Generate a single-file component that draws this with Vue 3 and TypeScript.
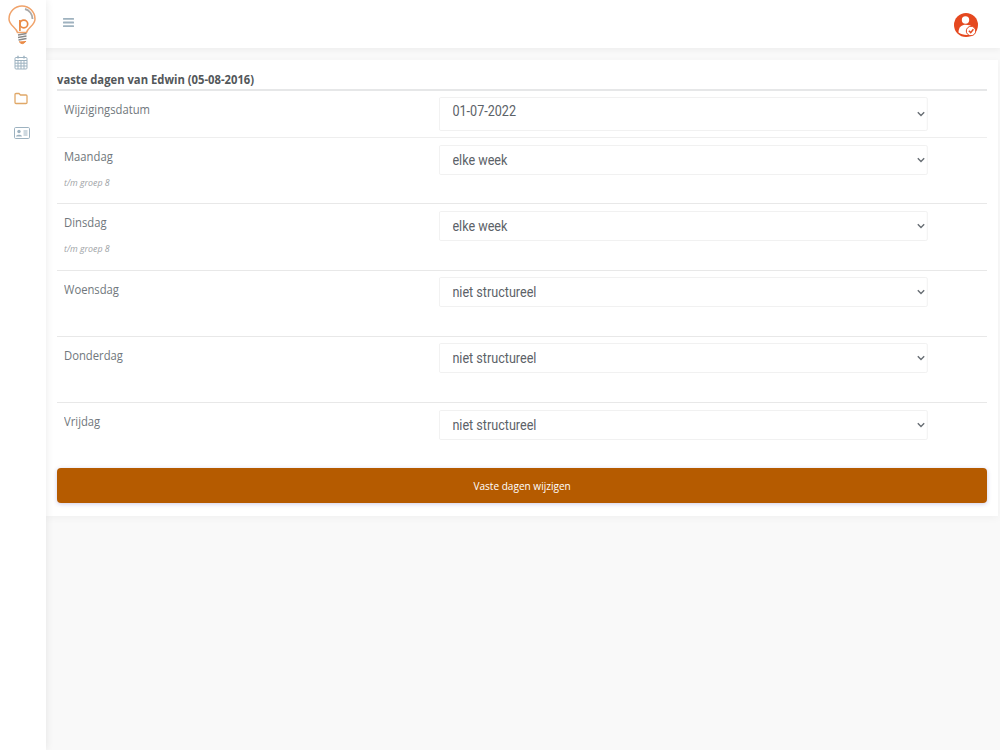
<script setup lang="ts">
interface Row { label: string; note?: string; value: string; options: string[] }
const rows: Row[] = [
  { label: 'Wijzigingsdatum', value: '01-07-2022', options: ['01-07-2022'] },
  { label: 'Maandag', note: 't/m groep 8', value: 'elke week', options: ['elke week', 'niet structureel'] },
  { label: 'Dinsdag', note: 't/m groep 8', value: 'elke week', options: ['elke week', 'niet structureel'] },
  { label: 'Woensdag', value: 'niet structureel', options: ['elke week', 'niet structureel'] },
  { label: 'Donderdag', value: 'niet structureel', options: ['elke week', 'niet structureel'] },
  { label: 'Vrijdag', value: 'niet structureel', options: ['elke week', 'niet structureel'] },
]
</script>

<template>
  <div class="app">
    <aside class="sidebar">
      <div class="logo">
        <svg width="30" height="42" viewBox="0 0 30 42" fill="none">
          <path d="M9.5 27.5 C8.5 22.5 1 20.5 1 14 A13 13 0 0 1 27 14 C27 20.5 19.5 22.5 18.5 27.5 Z" stroke="#f0a36b" stroke-width="1.5" />
          <path d="M17 4 A10.5 10.5 0 0 1 24.5 14" stroke="#a9a9a9" stroke-width="1.9" />
          <circle cx="15.8" cy="19" r="3.9" stroke="#ea8a45" stroke-width="1.7" />
          <path d="M11.9 15 V26" stroke="#ea8a45" stroke-width="1.7" />
          <path d="M10 30 L18.5 28.5 M10 32.5 L18.5 31 M10.5 35 L18.5 33.5" stroke="#8a8a8a" stroke-width="1.3" />
          <path d="M11 36.5 Q14.5 41 18 36" fill="#ea8a45" stroke="#ea8a45" stroke-width="1" />
        </svg>
      </div>
      <nav class="nav">
        <svg width="14" height="15" viewBox="0 0 14 15" fill="none" stroke="#9db2c0" stroke-width="1">
          <rect x="1" y="2.5" width="12" height="11.5" rx="1" />
          <path d="M1 5.5 H13 M1 8.2 H13 M1 11 H13 M4 5.5 V14 M7 5.5 V14 M10 5.5 V14" />
          <path d="M4 .8 V3.5 M10 .8 V3.5" stroke-width="1.4" />
        </svg>
        <svg width="14" height="13" viewBox="0 0 14 13" fill="none" stroke="#e0a868" stroke-width="1.3">
          <path d="M1 2.5 A1 1 0 0 1 2 1.5 H5 L6.5 3 H12 A1 1 0 0 1 13 4 V10.5 A1 1 0 0 1 12 11.5 H2 A1 1 0 0 1 1 10.5 Z" />
        </svg>
        <svg width="16" height="12" viewBox="0 0 16 12" fill="none">
          <rect x=".5" y=".5" width="15" height="11" rx="1.2" stroke="#9db2c0" />
          <circle cx="5" cy="4.5" r="1.7" fill="#9db2c0" />
          <path d="M2 9.5 C2 7 8 7 8 9.5 Z" fill="#9db2c0" />
          <path d="M9.5 4 H13.5 M9.5 6 H13.5 M9.5 8 H13.5" stroke="#9db2c0" />
        </svg>
      </nav>
    </aside>

    <div class="main">
      <header class="topbar">
        <svg class="burger" width="11" height="9" viewBox="0 0 11 9" fill="#9fb2bf">
          <rect y="0" width="11" height="1.8" rx=".5" />
          <rect y="3.6" width="11" height="1.8" rx=".5" />
          <rect y="7.2" width="11" height="1.8" rx=".5" />
        </svg>
        <svg class="avatar" width="24" height="24" viewBox="0 0 24 24">
          <circle cx="12" cy="12" r="12" fill="#e5481f" />
          <circle cx="11.5" cy="7" r="3.7" fill="#fff" />
          <path d="M4.5 19.5 C4.5 14 8 11.8 11.5 11.8 C14.5 11.8 17 12.6 18.5 14 L17 21.5 C12 22.5 7 21.5 4.5 19.5 Z" fill="#fff" />
          <circle cx="17" cy="18" r="4.7" fill="#fff" stroke="#e5481f" stroke-width="1" />
          <path d="M14.9 17.7 L16.7 19.6 L19.4 16.2" fill="none" stroke="#e5481f" stroke-width="1.5" />
        </svg>
      </header>

      <section class="card">
        <h1 class="title">vaste dagen van Edwin (05-08-2016)</h1>
        <form class="form" @submit.prevent>
          <div v-for="(row, i) in rows" :key="row.label" class="row" :class="{ first: i === 0, last: i === rows.length - 1 }">
            <div class="label">
              <div class="name">{{ row.label }}</div>
              <div v-if="row.note" class="note">{{ row.note }}</div>
            </div>
            <div class="field">
              <select class="select" :value="row.value">
                <option v-for="o in row.options" :key="o" :value="o">{{ o }}</option>
              </select>
              <svg class="chevron" width="8" height="6" viewBox="0 0 8 6" fill="none">
                <path d="M.8 1.3 L4 4.5 L7.2 1.3" stroke="#676d73" stroke-width="1.4" />
              </svg>
            </div>
          </div>
          <button class="submit" type="submit"><span class="submit-text">Vaste dagen wijzigen</span></button>
        </form>
      </section>
    </div>
  </div>
</template>

<style scoped>
.app {
  display: flex;
  height: 750px;
  overflow: hidden;
  background: #f9f9f9;
  font-family: "Open Sans", sans-serif;
}
.sidebar {
  width: 46px;
  flex: none;
  background: #fff;
  box-shadow: 0 0 8px rgba(0, 0, 0, 0.09);
  z-index: 2;
}
.logo {
  height: 48px;
  padding: 5px 0 0 8px;
  box-sizing: border-box;
}
.logo svg { display: block; overflow: visible; }
.nav {
  display: flex;
  flex-direction: column;
  align-items: flex-start;
  padding: 7px 0 0 14px;
  gap: 22px;
}
.main {
  flex: 1;
  min-width: 0;
  padding-right: 2px;
}
.topbar {
  height: 48px;
  margin-right: -2px;
  background: #fff;
  display: flex;
  align-items: center;
  justify-content: space-between;
  padding: 0 22px 2px 17px;
  box-shadow: 0 2px 6px rgba(0, 0, 0, 0.05);
  box-sizing: border-box;
  position: relative;
}
.burger { margin-top: -1px; }
.avatar { margin-top: 3px; }
.card {
  margin-top: 12px;
  background: #fff;
  padding: 11px 11px 13px 11px;
  height: 456px;
  box-sizing: border-box;
  box-shadow: 0 2px 8px rgba(0, 0, 0, 0.04);
}
.title {
  margin: 0;
  font-size: 12.5px;
  line-height: 17px;
  font-weight: 700;
  color: #53575a;
  padding-bottom: 1px;
  transform: scaleX(0.9);
  transform-origin: left center;
}
.form {
  border-top: 2px solid #e6e7e8;
}
.row {
  display: flex;
  align-items: flex-start;
  height: 66.25px;
  padding-top: 6.6px;
  box-sizing: border-box;
  border-bottom: 1px solid #e8e8e8;
}
.row.first {
  height: 47px;
  padding-top: 6px;
  border-bottom-color: #eeeeee;
}
.row.last { border-bottom: 0; height: 64px; }
.label {
  width: 382px;
  flex: none;
  padding-left: 7px;
  box-sizing: border-box;
}
.name,
.note {
  transform: scaleX(0.9);
  transform-origin: left center;
}
.name {
  font-size: 12.5px;
  line-height: 17px;
  color: #70777c;
  margin-top: 3.6px;
}
.note {
  font-size: 9.8px;
  line-height: 12px;
  font-style: italic;
  color: #a0a4a7;
  margin-top: 11.4px;
}
.field {
  position: relative;
  width: 489px;
  flex: none;
}
.select {
  display: block;
  width: 543.3px;
  height: 30px;
  padding: 0 0 0 13.9px;
  border: 1px solid #f0f0f0;
  border-radius: 2px;
  background-color: #fff;
  font-family: Roboto, sans-serif;
  font-size: 14px;
  color: #5c6268;
  appearance: none;
  -webkit-appearance: none;
  transform: scaleX(0.9);
  transform-origin: left center;
}
.chevron {
  position: absolute;
  right: 3px;
  top: 50%;
  margin-top: -3px;
}
.row.first .select { height: 34px; padding-bottom: 7px; }
.submit {
  display: block;
  width: 100%;
  height: 35px;
  margin-top: 1px;
  padding: 0;
  border: 0;
  border-radius: 4px;
  background: #b55b00;
  color: #fff;
  font-family: "Open Sans", sans-serif;
  font-size: 11.2px;
  box-shadow: 0 1px 4px rgba(60, 50, 160, 0.25);
}
.submit-text {
  display: inline-block;
  transform: scaleX(0.9);
}
</style>

<style>
body { margin: 0; }
</style>
